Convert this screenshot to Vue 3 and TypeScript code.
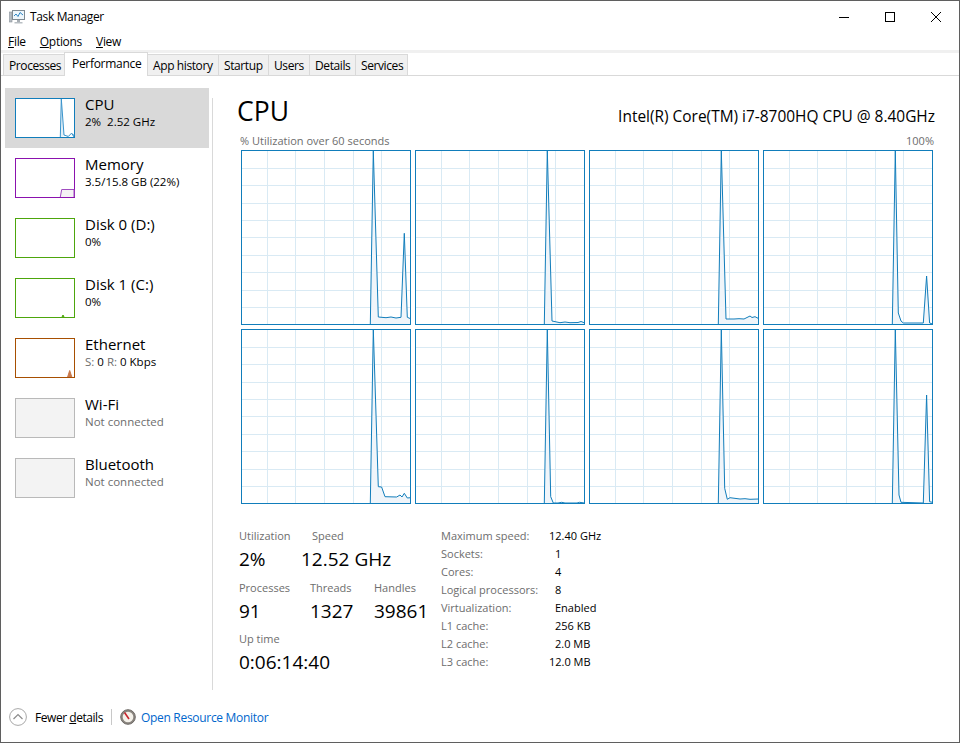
<script setup lang="ts">
interface Device {
  name: string
  sub: string
  kind: string
  active?: boolean
  line?: string
}

const tabs = [
  { label: 'Processes', width: 62 },
  { label: 'Performance', width: 84 },
  { label: 'App history', width: 72 },
  { label: 'Startup', width: 51 },
  { label: 'Users', width: 42 },
  { label: 'Details', width: 47 },
  { label: 'Services', width: 53 }
]

const devices: Device[] = [
  { name: 'CPU', sub: '2%  2.52 GHz', kind: 'cpu', active: true, line: '45.3,39 46.3,1 49,37 53.3,38.5 56.7,35 58.7,38.7 59,36' },
  { name: 'Memory', sub: '3.5/15.8 GB (22%)', kind: 'mem', line: '45.3,39 46.7,31.5 59,31.5 59,39' },
  { name: 'Disk 0 (D:)', sub: '0%', kind: 'disk' },
  { name: 'Disk 1 (C:)', sub: '0%', kind: 'disk', line: '47,39 48,37 49,39' },
  { name: 'Ethernet', sub: 'S: 0 R: 0 Kbps', kind: 'net', line: '52.6,39 54.7,32.5 56.8,39' },
  { name: 'Wi-Fi', sub: 'Not connected', kind: 'off' },
  { name: 'Bluetooth', sub: 'Not connected', kind: 'off' }
]

const gridX = [26, 54, 83, 112, 140]
const gridY = [18, 35, 53, 70, 87, 105, 122, 140, 157]

const cores: string[] = [
  '129.3,174.5 132.3,.7 137.3,167 145,167.7 150,167 155,168 160,167.3 163.3,83.3 166.3,167.3 169.5,168.7',
  '129.3,174.5 132.3,.7 137,171 145,172.7 150,172 155,172.7 163,172.5 166,171.5 169.5,172.8',
  '129.3,174.5 132.3,.7 137,169 145,169 150,168.7 155,169 161,166 163,167.5 166,166.7 169.5,168.5',
  '129.3,174.5 132.3,.7 135.3,163 138,171 140.3,173 160.3,173 163.6,126 166.6,173 169.5,174',
  '129.3,174.5 132.3,.3 137.3,157.7 140.6,158 144,167.7 155.7,168 159,166 161,168 163.3,164.3 166.3,169 169.5,168.7',
  '129.3,174.5 132.3,.3 135.7,167.7 138.3,174 143,174 146.7,173.3 150,174 162,174 164.5,173.3 169.5,174',
  '129.3,174.5 132.3,.3 135.7,159.3 138.3,170.3 141,168.7 151,170 156,169.7 161,170.3 169.5,170',
  '129.3,174.5 132.3,.3 136,166 138,173.3 160.3,174 163.6,66 166.6,172.7 169.5,173.3'
]

const closed = (line: string) => `${line} 169.5,174.5`
</script>

<template>
  <div class="window">
    <header class="titlebar">
      <svg class="app-icon" width="16" height="16" viewBox="0 0 16 16">
        <rect x="0" y="3" width="3" height="10" fill="#b5bcc2" stroke="#8a9299" stroke-width=".6" />
        <rect x="3.5" y="1.5" width="12" height="9" fill="#eef6fb" stroke="#7f8a92" />
        <polyline points="5,7 7,5 9,7.5 11,3.5 14,6" fill="none" stroke="#2f86c4" />
        <rect x="8" y="11" width="3" height="2" fill="#a6adb3" />
        <rect x="5.5" y="13" width="8" height="1.5" fill="#b9bfc4" />
      </svg>
      <span class="title-text">Task Manager</span>
      <div class="controls">
        <svg width="10" height="10" viewBox="0 0 10 10"><path d="M0 5.5h10" stroke="#000" /></svg>
        <svg width="10" height="10" viewBox="0 0 10 10"><rect x=".5" y=".5" width="9" height="9" fill="none" stroke="#000" /></svg>
        <svg width="10" height="10" viewBox="0 0 10 10"><path d="M0 0l10 10M10 0L0 10" stroke="#000" /></svg>
      </div>
    </header>

    <nav class="menubar">
      <span><u>F</u>ile</span>
      <span><u>O</u>ptions</span>
      <span><u>V</u>iew</span>
    </nav>

    <div class="tabstrip">
      <div
        v-for="tab in tabs"
        :key="tab.label"
        class="tab"
        :class="{ current: tab.label === 'Performance' }"
        :style="{ width: `${tab.width}px` }"
      >{{ tab.label }}</div>
    </div>

    <main class="content">
      <aside class="sidebar">
        <div v-for="d in devices" :key="d.name" class="device" :class="{ active: d.active }">
          <svg class="thumb" :class="d.kind" width="60" height="40" viewBox="0 0 60 40">
            <rect x=".5" y=".5" width="59" height="39" class="thumb-box" />
            <polyline v-if="d.line" :points="d.line" class="thumb-line" />
          </svg>
          <div class="device-text">
            <div class="device-name">{{ d.name }}</div>
            <div class="device-sub" :class="{ muted: d.kind === 'off' }">
              <template v-if="d.kind === 'net'">
                <span class="dim">S:</span> 0 <span class="dim">R:</span> 0 Kbps
              </template>
              <template v-else>{{ d.sub }}</template>
            </div>
          </div>
        </div>
      </aside>
      <div class="divider"></div>

      <section class="panel">
        <div class="panel-head">
          <h1>CPU</h1>
          <div class="model">Intel(R) Core(TM) i7-8700HQ CPU @ 8.40GHz</div>
        </div>
        <div class="graph-caption">
          <span>% Utilization over 60 seconds</span>
          <span>100%</span>
        </div>
        <div class="graphs">
          <svg v-for="(core, i) in cores" :key="i" class="graph" width="170" height="175" viewBox="0 0 170 175">
            <path v-for="x in gridX" :key="x" :d="`M${x + 0.5} 1V174`" class="grid" />
            <path v-for="y in gridY" :key="y" :d="`M1 ${y + 0.5}H169`" class="grid" />
            <polygon :points="closed(core)" class="area" />
            <polyline :points="core" class="trace" />
            <rect x=".5" y=".5" width="169" height="174" class="frame" />
          </svg>
        </div>

        <div class="stats">
          <div class="live">
            <div class="live-row first">
              <div class="stat"><div class="label">Utilization</div><div class="value">2%</div></div>
              <div class="stat speed"><div class="label">Speed</div><div class="value">12.52 GHz</div></div>
            </div>
            <div class="live-row second">
              <div class="stat"><div class="label">Processes</div><div class="value">91</div></div>
              <div class="stat"><div class="label">Threads</div><div class="value">1327</div></div>
              <div class="stat"><div class="label">Handles</div><div class="value">39861</div></div>
            </div>
            <div class="stat"><div class="label">Up time</div><div class="value">0:06:14:40</div></div>
          </div>
          <div class="specs">
            <span class="label">Maximum speed:</span><span class="spec-wide">12.40 GHz</span>
            <span class="label">Sockets:</span><span>1</span>
            <span class="label">Cores:</span><span>4</span>
            <span class="label">Logical processors:</span><span>8</span>
            <span class="label">Virtualization:</span><span>Enabled</span>
            <span class="label">L1 cache:</span><span>256 KB</span>
            <span class="label">L2 cache:</span><span>2.0 MB</span>
            <span class="label">L3 cache:</span><span class="spec-wide">12.0 MB</span>
          </div>
        </div>
      </section>
    </main>

    <footer class="footer">
      <svg width="18" height="18" viewBox="0 0 18 18">
        <circle cx="9" cy="9" r="8.4" fill="#fff" stroke="#a8a8a8" />
        <path d="M4.5 11L9 6.5l4.5 4.5" fill="none" stroke="#8c8c8c" stroke-width="1.2" />
      </svg>
      <span class="fewer">Fewer <u>d</u>etails</span>
      <span class="foot-sep"></span>
      <svg width="16" height="16" viewBox="0 0 16 16">
        <circle cx="8" cy="8" r="7.3" fill="#8b8680" stroke="#6e6a66" />
        <circle cx="8" cy="8" r="5.3" fill="#f4f1ea" />
        <path d="M4.5 3.5L9 10" stroke="#c8242c" stroke-width="1.6" />
      </svg>
      <span class="monitor">Open Resource Monitor</span>
    </footer>
  </div>
</template>

<style>
html,
body {
  margin: 0;
  background: #fff;
}
</style>

<style scoped>
.window {
  box-sizing: border-box;
  width: 960px;
  height: 743px;
  border: 1px solid #5f5f5f;
  background: #fff;
  display: flex;
  flex-direction: column;
  font-family: "Open Sans", "Noto Sans", sans-serif;
  font-size: 12px;
  color: #000;
  overflow: hidden;
}

.titlebar {
  height: 31px;
  flex: none;
  display: flex;
  align-items: center;
  padding-left: 8px;
}

.app-icon {
  margin-right: 5px;
}

.title-text {
  font-size: 12px;
  letter-spacing: -0.35px;
}

.controls {
  margin-left: auto;
  display: flex;
  gap: 36px;
  margin-right: 18px;
}

.menubar {
  height: 18px;
  flex: none;
  display: flex;
  align-items: center;
  padding-left: 7px;
  gap: 14px;
  letter-spacing: -0.3px;
}

.tabstrip {
  box-sizing: border-box;
  height: 26px;
  flex: none;
  display: flex;
  align-items: flex-end;
  padding-left: 2px;
  border-top: 3px solid #f0f0f0;
  border-bottom: 1px solid #d9d9d9;
  position: relative;
}

.tab {
  box-sizing: border-box;
  height: 21px;
  flex: none;
  padding-left: 5px;
  background: #f0f0f0;
  border: 1px solid #d9d9d9;
  border-bottom: 0;
  margin-right: -1px;
  line-height: 22px;
  letter-spacing: -0.4px;
  white-space: nowrap;
}

.tab.current {
  height: 24px;
  margin-bottom: -1px;
  padding-left: 7px;
  background: #fff;
  position: relative;
  z-index: 1;
  line-height: 22px;
  letter-spacing: -0.3px;
}

.content {
  flex: 1;
  display: flex;
  min-height: 0;
}

.sidebar {
  width: 204px;
  margin: 12px 0 0 4px;
  flex: none;
}

.device {
  height: 60px;
  display: flex;
  align-items: flex-start;
  padding-left: 10px;
  gap: 10px;
}

.device.active {
  background: #d9d9d9;
}

.thumb {
  display: block;
  margin-top: 10px;
}

.thumb-box {
  fill: #fff;
  stroke: #117dbb;
}

.thumb-line {
  fill: #e4f0f7;
  stroke: #3a94cc;
  stroke-width: 1;
}

.thumb.mem .thumb-box {
  stroke: #8b12ae;
}

.thumb.mem .thumb-line {
  fill: #f4f2f4;
  stroke: #a04cc0;
}

.thumb.disk .thumb-box {
  stroke: #4da60c;
}

.thumb.disk .thumb-line {
  fill: #4da60c;
  stroke: #4da60c;
}

.thumb.net .thumb-box {
  stroke: #a74f01;
}

.thumb.net .thumb-line {
  fill: #c9784a;
  stroke: #c9784a;
}

.thumb.off .thumb-box {
  fill: #f3f3f3;
  stroke: #b9b9b9;
}

.device-text {
  margin-top: 6px;
}

.device-name {
  font-size: 15px;
  line-height: 20px;
}

.device-sub {
  font-size: 11.5px;
  line-height: 15px;
  white-space: pre;
}

.device-sub.muted,
.dim {
  color: #6d6d6d;
}

.divider {
  width: 1px;
  height: 592px;
  margin: 22px 0 0 3px;
  background: #d9d9d9;
  flex: none;
}

.panel {
  flex: 1;
  min-width: 0;
  padding: 0 24px 0 25px;
}

.panel-head {
  display: flex;
  align-items: flex-end;
  justify-content: space-between;
  height: 58px;
}

h1 {
  margin: 0 0 5px -1px;
  font-size: 26.5px;
  font-weight: 400;
  line-height: 36px;
}

.model {
  font-size: 15.45px;
  line-height: 20px;
  margin-bottom: 8px;
}

.graph-caption {
  display: flex;
  justify-content: space-between;
  padding: 0 1px 0 2px;
  font-size: 11px;
  line-height: 14px;
  height: 17px;
  color: #6d6d6d;
}

.graphs {
  display: grid;
  grid-template-columns: repeat(4, 170px);
  grid-auto-rows: 175px;
  gap: 4px;
  padding-left: 3px;
  margin-top: -1px;
}

.graph {
  display: block;
}

.grid {
  stroke: #d9eaf4;
  stroke-width: 1;
  fill: none;
}

.area {
  fill: #f0f5fa;
}

.trace {
  fill: none;
  stroke: #117dbb;
  stroke-width: 1;
}

.frame {
  fill: none;
  stroke: #117dbb;
}

.stats {
  display: flex;
  margin-top: 23px;
  padding-left: 1px;
}

.live {
  width: 202px;
  flex: none;
}

.live-row {
  display: grid;
}

.live-row.first {
  grid-template-columns: 62px auto;
  margin-bottom: 5px;
}

.live-row.second {
  grid-template-columns: 71px 64px auto;
  margin-bottom: 4px;
}

.speed .label {
  padding-left: 11px;
}

.label {
  color: #6d6d6d;
  font-size: 11px;
  line-height: 18px;
}

.value {
  font-size: 19px;
  line-height: 29px;
  white-space: nowrap;
}

.specs {
  display: grid;
  grid-template-columns: 108px auto;
  grid-auto-rows: 18px;
  font-size: 11px;
  line-height: 18px;
  justify-items: start;
}

.specs > span:nth-child(2n) {
  padding-left: 6px;
}

.specs > span.spec-wide {
  padding-left: 0;
}

.footer {
  height: 50px;
  flex: none;
  display: flex;
  align-items: center;
  padding-left: 8px;
}

.fewer {
  margin-left: 8px;
  letter-spacing: -0.45px;
}

.foot-sep {
  width: 1px;
  height: 16px;
  background: #c8c8c8;
  margin: 0 8px;
}

.monitor {
  margin-left: 5px;
  color: #0066cc;
  letter-spacing: -0.3px;
}
</style>
